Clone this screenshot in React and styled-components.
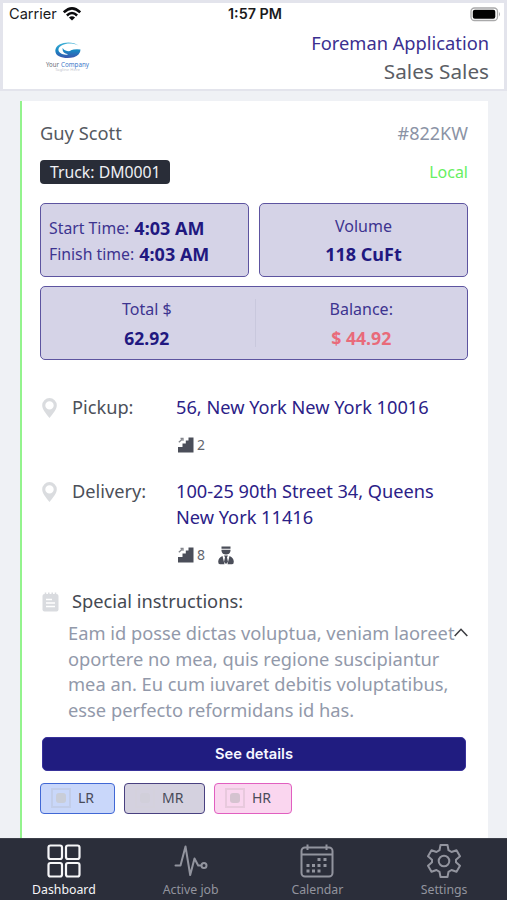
import React from "react";
import styled, { createGlobalStyle } from "styled-components";

const Global = createGlobalStyle`
  * { box-sizing: border-box; }
  body { margin: 0; background: #eff1f6; font-family: "Noto Sans", sans-serif; }
`;

const Phone = styled.div`
  width: 507px;
  height: 900px;
  display: flex;
  flex-direction: column;
  overflow: hidden;
  background: #eff1f5;
`;

const Header = styled.header`
  height: 91px;
  flex: none;
  border: solid #e3e4ec;
  border-width: 3px 3px 2px;
  background: #fff;
`;

const StatusBar = styled.div`
  height: 22px;
  padding: 0 3px 0 6px;
  display: grid;
  grid-template-columns: 1fr auto 1fr;
  align-items: center;
  font-family: Inter, sans-serif;
  color: #1a1a1c;
`;

const StatusGroup = styled.div`
  display: flex;
  align-items: center;
  gap: 6px;
  justify-content: ${(p) => (p.$end ? "flex-end" : "flex-start")};
`;

const Text = styled.span`
  display: block;
  white-space: nowrap;
  font-family: ${(p) => p.$font || "inherit"};
  font-size: ${(p) => p.$size}px;
  line-height: ${(p) => p.$line || 26}px;
  font-weight: ${(p) => p.$weight || 400};
  color: ${(p) => p.$color || "inherit"};
`;

const Brand = styled.div`
  display: flex;
  justify-content: space-between;
  padding: 5px 15px 0 40px;
`;

const Titles = styled.div`
  display: flex;
  flex-direction: column;
  align-items: flex-end;
  gap: 2px;
`;

const Scroll = styled.main`
  flex: 1;
  min-height: 0;
  padding: 10px 19px 0 20px;
`;

const Card = styled.section`
  height: 100%;
  background: #fff;
  border-left: 2px solid #93f38d;
  padding: 19px 20px 0 18px;
`;

const SplitRow = styled.div`
  display: flex;
  align-items: center;
  justify-content: space-between;
  height: ${(p) => p.$height}px;
`;

const Badge = styled.div`
  width: 130px;
  height: 24px;
  border-radius: 4px;
  background: #292d38;
  padding-left: 10px;
`;

const Panels = styled.div`
  display: grid;
  grid-template-columns: 1fr 1fr;
  gap: 9px 10px;
  margin-top: 5px;
`;

const Panel = styled.div`
  height: 74px;
  border: 1.5px solid #5d54a0;
  border-radius: 5px;
  background: #d5d3e7;
  color: #3d3490;
  display: flex;
  flex-direction: ${(p) => (p.$row ? "row" : "column")};
  align-items: ${(p) => (p.$start ? "flex-start" : "center")};
  grid-column: ${(p) => (p.$row ? "1 / -1" : "auto")};
  padding: ${(p) => (p.$start ? "11px 0 0 8px" : p.$row ? "0" : "8px 0 0")};
`;

const TimeLine = styled.div`
  display: flex;
  gap: 5px;
`;

const Amount = styled.div`
  flex: 1;
  height: 48px;
  display: flex;
  flex-direction: column;
  align-items: center;
  justify-content: center;
  gap: 3px;
  padding-right: ${(p) => (p.$first ? 2 : 0)}px;
  border-right: ${(p) => (p.$first ? "1px solid #c9c8dd" : "0")};
`;

const Address = styled.div`
  display: grid;
  grid-template-columns: 32px 104px 1fr;
  margin-top: ${(p) => p.$top}px;
`;

const IconCell = styled.div`
  padding: ${(p) => p.$pad || "4px 0 0 2px"};
  line-height: 0;
`;

const Facts = styled.div`
  display: flex;
  align-items: center;
  height: 22px;
  margin-top: 14px;
  padding-left: 2px;
  gap: 3px;
`;

const Worker = styled.div`
  margin-left: 10px;
  line-height: 0;
`;

const Notes = styled.div`
  display: flex;
  justify-content: space-between;
  margin-left: 28px;
  margin-top: 6px;
`;

const Chevron = styled.div`
  width: 14px;
  margin-left: -14px;
  padding-top: 8px;
  line-height: 0;
`;

const Button = styled.button`
  display: block;
  width: 424px;
  height: 34px;
  margin: 14px 0 0 2px;
  padding: 0;
  border: 1px solid #38319a;
  border-radius: 5px;
  background: #201c80;
  color: #f7f7ff;
  text-align: center;
`;

const Chips = styled.div`
  display: flex;
  gap: 9px;
  margin-top: 12px;
`;

const Chip = styled.div`
  width: ${(p) => p.$width}px;
  height: 31px;
  border: 1.5px solid ${(p) => p.$edge};
  border-radius: 4px;
  background: ${(p) => p.$fill};
  display: flex;
  align-items: center;
  gap: 7px;
  padding-left: 10px;
  color: #494b59;
`;

const ChipMark = styled.div`
  width: 20px;
  height: 20px;
  border: 2px solid ${(p) => p.$ring};
  display: grid;
  place-items: center;
  &::after {
    content: "";
    width: 10px;
    height: 10px;
    border-radius: 3px;
    background: ${(p) => p.$dot};
  }
`;

const Nav = styled.nav`
  flex: none;
  height: 62px;
  background: #2b2e3a;
  border-top: 1px solid #3d404a;
  display: grid;
  grid-template-columns: repeat(4, 1fr);
`;

const Tab = styled.div`
  display: flex;
  flex-direction: column;
  align-items: center;
  gap: 1px;
  padding: 4px 0 0 1px;
  color: ${(p) => (p.$active ? "#f6f6f8" : "#92949e")};
`;

const Logo = () => (
  <svg width="50" height="34" viewBox="0 0 50 34">
    <defs>
      <linearGradient id="swoosh" x1="0" y1="0" x2="0" y2="1">
        <stop offset="0" stopColor="#45b4d8" />
        <stop offset=".5" stopColor="#1789c4" />
        <stop offset="1" stopColor="#3b55ae" />
      </linearGradient>
    </defs>
    <path
      d="M33.500 3.500C29-.2 20-.6 14.500 2.500C9 5.500 9 11.500 14 14.300C20 17.300 30 16.300 33.500 12.500Q35.500 10.500 35.500 7.500Q29 7 26 8.200Q25 9.500 22 9Q19 8.300 17.500 6Q17.200 11.500 23 12.300Q21 13.500 17 12C12 10 12.500 5.500 17 3.200C22 .9 28 1 33.500 3.500Z"
      fill="url(#swoosh)"
    />
    <text x="1" y="24.500" fontFamily="Noto Sans, sans-serif" fontSize="7" fill="#666975" textLength="13" lengthAdjust="spacingAndGlyphs">Your</text>
    <text x="16" y="24.500" fontFamily="Noto Sans, sans-serif" fontSize="7" fill="#3d78c9" textLength="28" lengthAdjust="spacingAndGlyphs">Company</text>
    <text x="10" y="28.800" fontFamily="Noto Sans, sans-serif" fontSize="3" fill="#c5c7ce" textLength="25" lengthAdjust="spacingAndGlyphs">Tagline Here</text>
  </svg>
);

const Wifi = () => (
  <svg width="18" height="14" viewBox="0 0 18 14" fill="none" stroke="#0b0b0d" strokeWidth="2.500">
    <path d="M.8 5.300Q9-2.600 17.200 5.300M3.900 8.500Q9 3.500 14.100 8.500" />
    <path d="M9 13.600L5.900 10.500Q9 7.900 12.100 10.500Z" fill="#0b0b0d" stroke="none" />
  </svg>
);

const Battery = () => (
  <svg width="31" height="15" viewBox="0 0 31 15">
    <rect x="1" y="1" width="26.500" height="12.500" rx="3.500" fill="#fff" stroke="#a9a9aa" strokeWidth="1.300" />
    <rect x="2.800" y="2.800" width="22.500" height="9" rx="2" fill="#020202" />
    <path d="M29 5Q31 7.200 29 9.500Z" fill="#a9a9aa" />
  </svg>
);

const Pin = () => (
  <svg width="15" height="20" viewBox="0 0 15 20" fill="#dadcdf">
    <path fillRule="evenodd" d="M7.500 0A7.300 7.300 0 0 0 .2 7.300C.2 11.500 3.500 15 7.500 20C11.500 15 14.800 11.500 14.800 7.300A7.300 7.300 0 0 0 7.500 0ZM7.500 3.200A4.200 4.200 0 1 1 7.500 11.600A4.200 4.200 0 0 1 7.500 3.200Z" />
  </svg>
);

const NotePad = () => (
  <svg width="17" height="20" viewBox="0 0 17 20">
    <rect x=".5" y="2" width="16" height="17.500" rx="2" fill="#d9dbdf" />
    <path d="M3.500.5V4M6.800.5V4M10.200.5V4M13.500.5V4" stroke="#d9dbdf" strokeWidth="1.500" />
    <path d="M4 7.500H10M4 11H13M4 14.500H13" stroke="#fff" strokeWidth="1.400" />
  </svg>
);

const Stairs = () => (
  <svg width="16" height="16" viewBox="0 0 16 16" fill="#4b4e59">
    <path d="M0 15.500V10H4.500V6.500H7.800V3.500H10.500V.5H15.500V15.500Z" />
    <path d="M.8 5.200L4 2.500M2.500 1.500H5V3.700" fill="none" stroke="#85878e" strokeWidth="1.300" />
  </svg>
);

const WorkerIcon = () => (
  <svg width="16" height="19" viewBox="0 0 16 19" fill="#4b4e59">
    <path d="M3.500.5H12.500V2.800H3.500ZM3.500 3.800H12.500V5Q11.800 8.500 8 8.500Q4.200 8.500 3.500 5Z" />
    <path d="M6 9.500H10L9 11.300L10 16L8 18L6 16L7 11.300Z" />
    <path d="M4.500 10L6.500 18.300H2Q.2 18.300.2 15.800Q.4 11.500 4.500 10ZM11.500 10L9.500 18.300H14Q15.800 18.300 15.800 15.800Q15.600 11.500 11.500 10Z" />
  </svg>
);

const iconProps = { width: 36, height: 36, viewBox: "0 0 36 36", fill: "none", stroke: "currentColor" };

const GridIcon = () => (
  <svg {...iconProps} strokeWidth="2.200">
    <rect x="2.500" y="2.500" width="13.500" height="13.500" rx="2" />
    <rect x="20" y="2.500" width="13.500" height="13.500" rx="2" />
    <rect x="2.500" y="20" width="13.500" height="13.500" rx="2" />
    <rect x="20" y="20" width="13.500" height="13.500" rx="2" />
  </svg>
);

const PulseIcon = () => (
  <svg {...iconProps} strokeWidth="2" strokeLinejoin="round" strokeLinecap="round">
    <path d="M2.500 22.500H7.500L12.500 3.500L17.200 32L21.500 15.500L25.200 22.500H28" />
    <circle cx="31" cy="22.500" r="2.500" />
  </svg>
);

const CalendarIcon = () => (
  <svg {...iconProps} strokeWidth="2">
    <rect x="2.500" y="4.500" width="31" height="29" rx="3.500" />
    <path d="M2.500 11.500H33.500M8.500 1.500V7M27.500 1.500V7" />
    <path
      d="M18.500 16.500H21.500M24.500 16.500H27.500M7.500 22.500H10.500M13 22.500H16M18.500 22.500H21.500M24.500 22.500H27.500M7.500 28H10.500M13 28H16M18.500 28H21.500"
      strokeWidth="3"
    />
  </svg>
);

const GearIcon = () => (
  <svg {...iconProps} strokeWidth="2" strokeLinejoin="round">
    <path d="M14.500 2H21.500L22.500 7.200L25.500 9L30.500 7.200L34 13.300L30 16.800V19.200L34 22.700L30.500 28.800L25.500 27L22.500 28.800L21.500 34H14.500L13.500 28.800L10.500 27L5.500 28.800L2 22.700L6 19.200V16.800L2 13.300L5.500 7.200L10.500 9L13.500 7.200Z" />
    <circle cx="18" cy="18" r="5.300" />
  </svg>
);

const NOTES = [
  "Eam id posse dictas voluptua, veniam laoreet",
  "oportere no mea, quis regione suscipiantur",
  "mea an. Eu cum iuvaret debitis voluptatibus,",
  "esse perfecto reformidans id has.",
];

const TABS = [
  ["Dashboard", GridIcon],
  ["Active job", PulseIcon],
  ["Calendar", CalendarIcon],
  ["Settings", GearIcon],
];

const CHIPS = [
  { label: "LR", width: 75, edge: "#4168d5", fill: "#c9d7fa", ring: "#c2cde9", dot: "#c9cdd8" },
  { label: "MR", width: 81, edge: "#484080", fill: "#d4d1df", ring: "#d4d1dd", dot: "#d1cfda" },
  { label: "HR", width: 78, edge: "#e15fc0", fill: "#fad6ef", ring: "#e8c9dd", dot: "#d5c3d0" },
];

export default function App() {
  return (
    <Phone>
      <Global />
      <Header>
        <StatusBar>
          <StatusGroup>
            <Text $size={14.6} $line={22}>Carrier</Text>
            <Wifi />
          </StatusGroup>
          <Text $size={14.3} $line={22} $weight={600}>1:57 PM</Text>
          <StatusGroup $end>
            <Battery />
          </StatusGroup>
        </StatusBar>
        <Brand>
          <IconCell $pad="12px 0 0 2px">
            <Logo />
          </IconCell>
          <Titles>
            <Text $size={18.3} $color="#3b3090">Foreman Application</Text>
            <Text $size={20.7} $color="#5b5e65">Sales Sales</Text>
          </Titles>
        </Brand>
      </Header>

      <Scroll>
        <Card>
          <SplitRow $height={26}>
            <Text $size={18.3} $color="#555961">Guy Scott</Text>
            <Text $size={18} $color="#8b93a5">#822KW</Text>
          </SplitRow>
          <SplitRow $height={52}>
            <Badge>
              <Text $size={15.8} $line={24} $color="#eff0f4">Truck: DM0001</Text>
            </Badge>
            <Text $size={16} $color="#67ef62">Local</Text>
          </SplitRow>
          <Panels>
            <Panel $start>
              <TimeLine>
                <Text $size={15.8}>Start Time:</Text>
                <Text $size={18} $weight={700} $color="#211880">4:03 AM</Text>
              </TimeLine>
              <TimeLine>
                <Text $size={15.8}>Finish time:</Text>
                <Text $size={18} $weight={700} $color="#211880">4:03 AM</Text>
              </TimeLine>
            </Panel>
            <Panel>
              <Text $size={16} $line={28}>Volume</Text>
              <Text $size={18} $line={28} $weight={700} $color="#211880">118 CuFt</Text>
            </Panel>
            <Panel $row>
              <Amount $first>
                <Text $size={16}>Total $</Text>
                <Text $size={17.5} $weight={700} $color="#211880">62.92</Text>
              </Amount>
              <Amount>
                <Text $size={16}>Balance:</Text>
                <Text $size={17.7} $weight={700} $color="#e96a7a">$ 44.92</Text>
              </Amount>
            </Panel>
          </Panels>

          <Address $top={34}>
            <IconCell>
              <Pin />
            </IconCell>
            <Text $size={18.2} $color="#4c5059">Pickup:</Text>
            <div>
              <Text $size={18.2} $color="#2b2187">56, New York New York 10016</Text>
              <Facts>
                <Stairs />
                <Text $size={14} $line={22} $color="#63666e">2</Text>
              </Facts>
            </div>
          </Address>
          <Address $top={22}>
            <IconCell>
              <Pin />
            </IconCell>
            <Text $size={18.2} $color="#4c5059">Delivery:</Text>
            <div>
              <Text $size={18.2} $color="#2b2187">100-25 90th Street 34, Queens</Text>
              <Text $size={18.2} $color="#2b2187">New York 11416</Text>
              <Facts>
                <Stairs />
                <Text $size={14} $line={22} $color="#63666e">8</Text>
                <Worker>
                  <WorkerIcon />
                </Worker>
              </Facts>
            </div>
          </Address>
          <Address $top={22}>
            <IconCell>
              <NotePad />
            </IconCell>
            <Text $size={18.3} $color="#454952">Special instructions:</Text>
          </Address>
          <Notes>
            <div>
              {NOTES.map((line) => (
                <Text key={line} $size={18.3} $line={25.7} $color="#9299aa">
                  {line}
                </Text>
              ))}
            </div>
            <Chevron>
              <svg width="14" height="9" viewBox="0 0 14 9" fill="none" stroke="#3c3d42" strokeWidth="1.600">
                <path d="M.7 8L7 1.300L13.300 8" />
              </svg>
            </Chevron>
          </Notes>
          <Button>
            <Text $size={14.7} $line={32} $weight={600} $font="Inter, sans-serif">See details</Text>
          </Button>
          <Chips>
            {CHIPS.map((c) => (
              <Chip key={c.label} $width={c.width} $edge={c.edge} $fill={c.fill}>
                <ChipMark $ring={c.ring} $dot={c.dot} />
                <Text $size={14}>{c.label}</Text>
              </Chip>
            ))}
          </Chips>
        </Card>
      </Scroll>

      <Nav>
        {TABS.map(([label, Icon], i) => (
          <Tab key={label} $active={i === 0}>
            <Icon />
            <Text $size={12.3} $line={20}>{label}</Text>
          </Tab>
        ))}
      </Nav>
    </Phone>
  );
}
